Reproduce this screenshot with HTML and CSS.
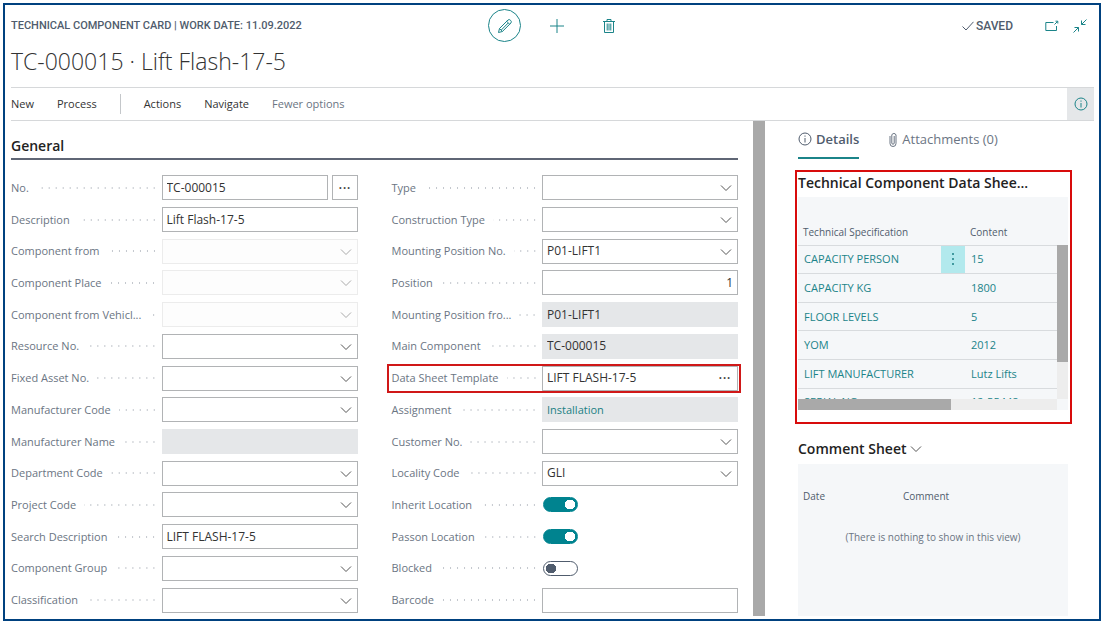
FILE: index.html
```
<!DOCTYPE html>
<html lang="en">
<head>
  <meta charset="UTF-8" />
  <meta name="viewport" content="width=device-width, initial-scale=1.0"/>
  <title>Technical Component Card</title>
  <link rel="stylesheet" href="styles.css">
</head>
<body>
  <svg class="defs" aria-hidden="true">
    <symbol id="chevron" viewBox="0 0 12 8"><path d="M1 1.5 L6 6.5 L11 1.5"/></symbol>
    <symbol id="info" viewBox="0 0 14 14"><circle cx="7" cy="7" r="6"/><path d="M7 6v4.5M7 3.5v1.2"/></symbol>
  </svg>

  <div class="window">
    <header>
      <div class="topbar">
        <span class="caption">TECHNICAL COMPONENT CARD | WORK DATE: 11.09.2022</span>
        <div class="tools">
          <button class="round" aria-label="Edit">
            <svg width="16" height="16" viewBox="0 0 16 16"><path d="M1.5 14.5 L2.5 10.5 L11 2 Q12.2 .9 13.5 2.3 Q15 3.7 13.9 5 L5.4 13.5 Z M2.5 10.5 L5.4 13.5 M9.7 3.3 L12.6 6.2 M4.3 12 L11.2 5"/></svg>
          </button>
          <button aria-label="New">
            <svg width="14" height="14" viewBox="0 0 14 14"><path d="M7 0v14M0 7h14"/></svg>
          </button>
          <button aria-label="Delete">
            <svg width="12" height="14" viewBox="0 0 12 14"><path d="M0 2.5h12M4 2.5v-2h4v2M1.5 2.5v11h9v-11M4.2 4.5v7M6 4.5v7M7.8 4.5v7"/></svg>
          </button>
        </div>
        <div class="state">
          <svg class="check" width="12" height="10" viewBox="0 0 12 10"><path d="M.5 5.5 L4 9 L11.5 .8"/></svg>
          <span>SAVED</span>
          <button aria-label="Open in new window">
            <svg width="14" height="12" viewBox="0 0 14 12"><path d="M8.5 2.5H.8v8h10.7V6M9.5 4.5 L12.5 1.5M10.5 1.2h2.3v2.3"/></svg>
          </button>
          <button aria-label="Collapse">
            <svg width="14" height="14" viewBox="0 0 14 14"><path d="M13.5 .5 L8.5 5.5M8.5 1.5v4h4M.5 13.5 L5.5 8.5M1.5 8.5h4v4"/></svg>
          </button>
        </div>
      </div>
      <h1>TC-000015 · Lift Flash-17-5</h1>
      <nav>
        <a href="#">New</a>
        <a href="#">Process</a>
        <span class="divider"></span>
        <a href="#">Actions</a>
        <a href="#">Navigate</a>
        <a href="#" class="muted">Fewer options</a>
        <button class="info" aria-label="Show details"><svg width="14" height="14"><use href="#info"/></svg></button>
      </nav>
    </header>

    <main>
      <form>
        <h2>General</h2>
        <div class="columns">
          <div class="column">
            <div class="field"><label for="no">No.</label><i></i><div class="box"><input id="no" value="TC-000015"></div><button type="button" class="more" aria-label="Select number">···</button></div>
            <div class="field"><label for="description">Description</label><i></i><div class="box"><input id="description" value="Lift Flash-17-5"></div></div>
            <div class="field"><label for="from">Component from</label><i></i><div class="box off"><select id="from" disabled><option></option></select><svg><use href="#chevron"/></svg></div></div>
            <div class="field"><label for="place">Component Place</label><i></i><div class="box off"><select id="place" disabled><option></option></select><svg><use href="#chevron"/></svg></div></div>
            <div class="field"><label for="vehicle">Component from Vehicl...</label><i></i><div class="box off"><select id="vehicle" disabled><option></option></select><svg><use href="#chevron"/></svg></div></div>
            <div class="field"><label for="resource">Resource No.</label><i></i><div class="box"><select id="resource"><option></option></select><svg><use href="#chevron"/></svg></div></div>
            <div class="field"><label for="asset">Fixed Asset No.</label><i></i><div class="box"><select id="asset"><option></option></select><svg><use href="#chevron"/></svg></div></div>
            <div class="field"><label for="maker">Manufacturer Code</label><i></i><div class="box"><select id="maker"><option></option></select><svg><use href="#chevron"/></svg></div></div>
            <div class="field"><label for="maker-name">Manufacturer Name</label><i></i><div class="box locked"><input id="maker-name" readonly></div></div>
            <div class="field"><label for="department">Department Code</label><i></i><div class="box"><select id="department"><option></option></select><svg><use href="#chevron"/></svg></div></div>
            <div class="field"><label for="project">Project Code</label><i></i><div class="box"><select id="project"><option></option></select><svg><use href="#chevron"/></svg></div></div>
            <div class="field"><label for="search">Search Description</label><i></i><div class="box"><input id="search" value="LIFT FLASH-17-5"></div></div>
            <div class="field"><label for="group">Component Group</label><i></i><div class="box"><select id="group"><option></option></select><svg><use href="#chevron"/></svg></div></div>
            <div class="field"><label for="class">Classification</label><i></i><div class="box"><select id="class"><option></option></select><svg><use href="#chevron"/></svg></div></div>
          </div>
          <div class="column">
            <div class="field"><label for="type">Type</label><i></i><div class="box"><select id="type"><option></option></select><svg><use href="#chevron"/></svg></div></div>
            <div class="field"><label for="construction">Construction Type</label><i></i><div class="box"><select id="construction"><option></option></select><svg><use href="#chevron"/></svg></div></div>
            <div class="field"><label for="mounting">Mounting Position No.</label><i></i><div class="box"><select id="mounting"><option>P01-LIFT1</option></select><svg><use href="#chevron"/></svg></div></div>
            <div class="field"><label for="position">Position</label><i></i><div class="box"><input id="position" class="number" value="1"></div></div>
            <div class="field"><label for="mounting-from">Mounting Position fro...</label><i></i><div class="box locked"><input id="mounting-from" value="P01-LIFT1" readonly></div></div>
            <div class="field"><label for="main">Main Component</label><i></i><div class="box locked"><input id="main" value="TC-000015" readonly></div></div>
            <div class="field marked"><label for="template">Data Sheet Template</label><i></i><div class="box"><input id="template" value="LIFT FLASH-17-5"><button type="button" aria-label="Select template">···</button></div></div>
            <div class="field"><label for="assignment">Assignment</label><i></i><div class="box locked"><input id="assignment" class="linked" value="Installation" readonly></div></div>
            <div class="field"><label for="customer">Customer No.</label><i></i><div class="box"><select id="customer"><option></option></select><svg><use href="#chevron"/></svg></div></div>
            <div class="field"><label for="locality">Locality Code</label><i></i><div class="box"><select id="locality"><option>GLI</option></select><svg><use href="#chevron"/></svg></div></div>
            <div class="field"><label for="inherit">Inherit Location</label><i></i><div class="switch"><input type="checkbox" id="inherit" checked></div></div>
            <div class="field"><label for="passon">Passon Location</label><i></i><div class="switch"><input type="checkbox" id="passon" checked></div></div>
            <div class="field"><label for="blocked">Blocked</label><i></i><div class="switch"><input type="checkbox" id="blocked"></div></div>
            <div class="field"><label for="barcode">Barcode</label><i></i><div class="box"><input id="barcode"></div></div>
          </div>
        </div>
      </form>

      <div class="splitter"></div>

      <aside>
        <div class="tabs">
          <a href="#" class="current"><svg width="14" height="14"><use href="#info"/></svg>Details</a>
          <a href="#"><svg width="8" height="15" viewBox="0 0 8 15"><path d="M1 4v7.5a2.8 2.8 0 0 0 6 0V3a2.2 2.2 0 0 0-4.2 0v8a1.2 1.2 0 0 0 2.4 0V4"/></svg>Attachments (0)</a>
        </div>

        <section class="sheet">
          <h3>Technical Component Data Shee...</h3>
          <div class="list">
            <div class="rows">
              <table>
                <thead>
                  <tr><th class="spec">Technical Specification</th><th class="menu"></th><th>Content</th></tr>
                </thead>
                <tbody>
                  <tr><td>CAPACITY PERSON</td><td class="menu"><button aria-label="Show more"><svg width="4" height="14" viewBox="0 0 4 14"><circle cx="2" cy="2" r="1"/><circle cx="2" cy="7" r="1"/><circle cx="2" cy="12" r="1"/></svg></button></td><td>15</td></tr>
                  <tr><td>CAPACITY KG</td><td></td><td>1800</td></tr>
                  <tr><td>FLOOR LEVELS</td><td></td><td>5</td></tr>
                  <tr><td>YOM</td><td></td><td>2012</td></tr>
                  <tr><td>LIFT MANUFACTURER</td><td></td><td>Lutz Lifts</td></tr>
                  <tr><td>SERIAL NO</td><td></td><td>12-55448</td></tr>
                </tbody>
              </table>
            </div>
            <div class="vscroll"><div class="thumb"></div></div>
            <div class="hscroll"><div class="thumb"></div></div>
          </div>
        </section>

        <section class="comments">
          <h3>Comment Sheet<svg width="14" height="8"><use href="#chevron"/></svg></h3>
          <div class="empty">
            <table>
              <thead><tr><th class="date">Date</th><th>Comment</th></tr></thead>
            </table>
            <p>(There is nothing to show in this view)</p>
          </div>
        </section>
      </aside>
    </main>
  </div>
</body>
</html>
```
FILE: styles.css
```
* { box-sizing: border-box; }
body {
  margin: 0;
  font-family: 'Open Sans', 'Noto Sans', sans-serif;
  font-size: 12px;
  line-height: 16px;
  color: #333;
  background: #fff;
}
h1, h2, h3, p { margin: 0; }
a { color: inherit; text-decoration: none; }
svg { fill: none; stroke: currentColor; stroke-width: 1; }
input, select, button {
  font: inherit;
  color: inherit;
  border: none;
  border-radius: 0;
  background: none;
  padding: 0;
  margin: 0;
}
button { cursor: pointer; display: flex; align-items: center; justify-content: center; }
.defs { position: absolute; width: 0; height: 0; }

.window {
  display: flex;
  flex-direction: column;
  min-height: calc(100vh - 7px);
  margin: 3px 3px 4px;
  border: 2px solid #00417f;
}

/* header */
header { padding: 0 5px 0 6px; }
.topbar {
  display: grid;
  grid-template-columns: 1fr auto 1fr;
  align-items: center;
  height: 41px;
  font-family: Roboto, sans-serif;
  font-weight: 500;
  color: #505c6d;
}
.caption { font-size: 11px; }
.tools { display: flex; align-items: center; gap: 24px; padding-left: 6px; color: #1b8489; }
.tools button { width: 28px; height: 32px; }
.tools .round { width: 33px; height: 33px; margin-right: -2px; border: 1px solid #1b8489; border-radius: 50%; }
.state { display: flex; align-items: center; justify-content: flex-end; padding-right: 7px; }
.state button { color: #1b8489; margin-left: 14px; }
.state span + button { margin-left: 32px; }
.check { margin-right: 2px; }
h1 {
  height: 41px;
  font-size: 23px;
  line-height: 30px;
  font-weight: 300;
}
nav {
  display: flex;
  align-items: center;
  height: 34px;
  gap: 23px;
  font-size: 11px;
  border-top: 1px solid #d6d8da;
  border-bottom: 1px solid #d6d8da;
}
nav .muted { color: #6b7583; }
.divider { width: 1px; height: 20px; background: #c4c7ca; }
.info {
  width: 27px;
  height: 32px;
  margin-left: auto;
  background: #e5e7e9;
  color: #1b8489;
}

/* card */
main { display: flex; flex: 1; }
form {
  display: flex;
  flex-direction: column;
  flex: 1;
  padding: 12px 15px 3px 6px;
}
h2 {
  height: 27px;
  font-size: 14px;
  line-height: 26px;
  font-weight: 600;
  color: #222;
  border-bottom: 2px solid #5f6675;
}
.columns { display: flex; flex: 1; gap: 34px; padding-top: 12px; }
.column { display: grid; flex: 1; grid-auto-rows: 1fr; align-items: center; }
.field { position: relative; display: flex; align-items: center; color: #6b7583; }
.field label { flex: none; white-space: nowrap; font-size: 11px; }
.field i {
  flex: 1;
  height: 4px;
  margin: 0 4px 0 8px;
  background: radial-gradient(circle, #c3c7cd 1px, transparent 1px) right center / 7px 4px repeat-x;
}
.box, .switch { flex: none; width: 196px; height: 25px; display: flex; }
.box { position: relative; border: 1px solid #b1b3b5; color: #333; background: #fff; }
.box input, .box select { flex: 1; min-width: 0; width: 100%; padding: 0 4px; appearance: none; }
.box svg {
  position: absolute;
  right: 5px;
  top: 8px;
  width: 12px;
  height: 8px;
  color: #555;
  pointer-events: none;
}
.box button, .more { width: 25px; font-size: 16px; color: #444; }
.box:has(+ .more) { width: 166px; }
.more { height: 25px; margin-left: 4px; border: 1px solid #b1b3b5; }
.box .more, .more { width: 26px; }
.box .number { text-align: right; }
.off { border-color: #ececec; background: #fdfdfd; }
.off svg { color: #aaa; }
.locked { border-color: #e5e7e9; background: #e5e7e9; }
.box .linked { color: #1b7f84; font-size: 11px; }
.marked::before {
  content: "";
  position: absolute;
  inset: -2px -3px -2px -5px;
  border: 2px solid #d01818;
  z-index: 1;
  pointer-events: none;
}
.switch { align-items: center; padding-left: 1px; }
.switch input {
  appearance: none;
  width: 35px;
  height: 15px;
  border: 1px solid #505c6d;
  border-radius: 8px;
  background: radial-gradient(circle at 7px 50%, #505c6d 5px, transparent 5px);
}
.switch input:checked {
  border-color: #00838f;
  background: radial-gradient(circle at 26px 50%, #fff 5px, #00838f 5px);
}
.splitter { flex: none; width: 12px; margin-bottom: 3px; background: #a9a9a9; }

/* fact boxes */
aside {
  display: flex;
  flex-direction: column;
  flex: 0 0 334px;
  padding: 0 27px 3px 30px;
}
.tabs {
  display: flex;
  gap: 30px;
  height: 49px;
  padding-left: 3px;
  font-size: 13px;
  color: #6b7583;
}
.tabs a { display: flex; align-items: center; gap: 5px; height: 38px; border-bottom: 2px solid transparent; }
.tabs .current { gap: 4px; font-weight: 600; color: #505c6d; border-color: #1b8489; }
h3 {
  display: flex;
  align-items: center;
  height: 25px;
  padding-bottom: 3px;
  font-size: 14px;
  font-weight: 600;
  white-space: nowrap;
  color: #222;
}
.sheet { padding: 0 2px 12px 1px; border: 2px solid #d80c0c; }
.list {
  display: grid;
  grid-template-columns: 1fr 11px;
  grid-template-rows: 202px 11px;
  background: #f5f7f9;
}
.rows { overflow: hidden; }
table { width: 100%; border-collapse: collapse; table-layout: fixed; }
.rows table { height: 219px; }
th {
  height: 48px;
  padding: 0 5px 5px;
  font-size: 10px;
  font-weight: 400;
  text-align: left;
  vertical-align: bottom;
  color: #505c6d;
  white-space: nowrap;
}
.spec { width: 143px; }
th.menu { width: 24px; }
td { padding: 0 6px; border-top: 1px solid #d8dbde; color: #1b8489; font-size: 11px; white-space: nowrap; }
td.menu { padding: 0; background: #b2e9ed; }
.menu button { width: 100%; height: 16px; color: #1b7f84; }
.menu svg { fill: currentColor; stroke: none; }
.vscroll { margin-top: 48px; background: #ededed; }
.vscroll .thumb { height: 117px; background: #a9a9a9; }
.hscroll { background: #ededed; }
.hscroll .thumb { width: 59%; height: 11px; background: #a9a9a9; }

.comments { display: flex; flex-direction: column; flex: 1; padding: 12px 4px 0 3px; }
.comments h3 { height: 28px; }
.comments h3 svg { color: #555; margin-left: 2px; }
.empty { flex: 1; background: #f5f7f9; }
.empty th { height: 45px; }
.date { width: 100px; }
.empty p { padding-top: 20px; font-size: 10px; text-align: center; color: #6b7583; }
```
